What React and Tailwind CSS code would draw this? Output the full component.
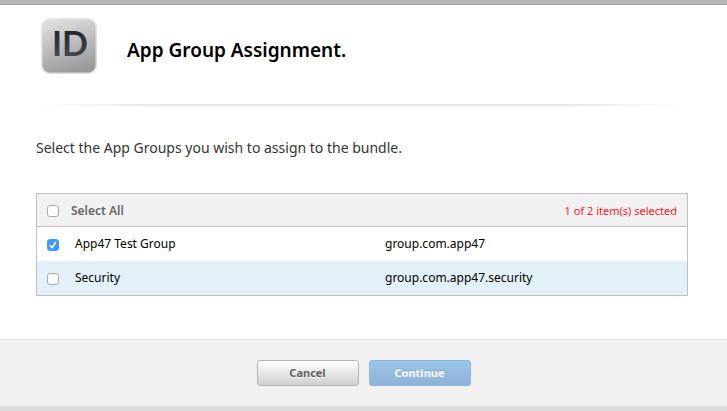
import { useState } from "react";

const groups = [
  { id: "app47", name: "App47 Test Group", identifier: "group.com.app47" },
  { id: "security", name: "Security", identifier: "group.com.app47.security" },
];

function AppIdIcon() {
  return (
    <svg className="h-14 w-14 shrink-0" viewBox="0 0 56 56" role="img" aria-label="App ID">
      <defs>
        <linearGradient id="tile" x1="0.3" y1="0" x2="0.6" y2="1">
          <stop offset="0" stopColor="#dedede" />
          <stop offset="1" stopColor="#989898" />
        </linearGradient>
        <linearGradient id="rim" x1="0" y1="0" x2="0" y2="1">
          <stop offset="0" stopColor="#e8e8e8" />
          <stop offset="1" stopColor="#dadada" />
        </linearGradient>
        <linearGradient id="ink" x1="0" y1="0" x2="0" y2="1">
          <stop offset="0.2" stopColor="#20272c" />
          <stop offset="1" stopColor="#4b5155" />
        </linearGradient>
      </defs>
      <rect width="56" height="56" rx="9" fill="url(#rim)" />
      <rect x="1.5" y="1.5" width="53" height="53" rx="7.5" fill="url(#tile)" />
      <text
        x="29"
        y="38"
        textAnchor="middle"
        fill="url(#ink)"
        className="font-['Lato',sans-serif] text-[34px] font-bold"
      >
        ID
      </text>
    </svg>
  );
}

function Checkbox({ id, checked, onChange, label }) {
  return (
    <span className="relative block h-3 w-3">
      <input
        id={id}
        type="checkbox"
        aria-label={label}
        checked={checked}
        onChange={onChange}
        className="peer block h-3 w-3 appearance-none rounded-[3px] border border-[#aaaaaa] bg-white checked:border-[#3b99fc] checked:bg-[#3b99fc]"
      />
      <svg
        className="pointer-events-none absolute inset-0 hidden h-3 w-3 peer-checked:block"
        viewBox="0 0 12 12"
        fill="none"
        stroke="white"
        strokeWidth="1.7"
        strokeLinecap="round"
        strokeLinejoin="round"
        aria-hidden="true"
      >
        <path d="M3.3 6.6 5.1 8.6 8.6 3.4" />
      </svg>
    </span>
  );
}

export default function App() {
  const [selected, setSelected] = useState(["app47"]);
  const allSelected = selected.length === groups.length;

  const toggle = (id) =>
    setSelected((current) =>
      current.includes(id) ? current.filter((item) => item !== id) : [...current, id]
    );

  return (
    <div className="min-h-screen bg-[#dadbdc] font-['Noto_Sans','Open_Sans',sans-serif] text-black">
      <div className="h-[5px] border-b border-[#a5a5a5] bg-[#b8b8b8]" />

      <main className="bg-white pt-[13px] pr-[39px] pb-[43px] pl-9">
        <header className="flex items-center gap-[30px] pl-[5px]">
          <AppIdIcon />
          <h1 className="pt-2 text-[19px] leading-6 font-semibold">App Group Assignment.</h1>
        </header>

        <div className="mt-[30px] h-[3px] bg-[linear-gradient(to_right,white,transparent_20%,transparent_80%,white),linear-gradient(to_bottom,#dfdfdf,#fafafa)]" />

        <p className="mt-[29px] text-[14px] leading-6 text-[#333333]">
          Select the App Groups you wish to assign to the bundle.
        </p>

        <table className="mt-[33px] w-full table-fixed border-separate border-spacing-0 border border-[#c0c0c0] text-left text-[12px] leading-4">
          <colgroup>
            <col className="w-[34px]" />
            <col className="w-[304px]" />
            <col />
          </colgroup>
          <thead className="bg-[#f1f1f1]">
            <tr className="h-[33px]">
              <th className="border-b border-[#c0c0c0] p-0 pt-[2px] pl-[10px]">
                <Checkbox
                  id="select-all"
                  label="Select All"
                  checked={allSelected}
                  onChange={() => setSelected(allSelected ? [] : groups.map((group) => group.id))}
                />
              </th>
              <th className="border-b border-[#c0c0c0] p-0 pt-[2px] font-semibold text-[#666666]">
                <label htmlFor="select-all">Select All</label>
              </th>
              <th className="border-b border-[#c0c0c0] p-0 pt-[2px] pr-[10px] text-right text-[11px] font-normal text-[#ff1424]">
                {selected.length} of {groups.length} item(s) selected
              </th>
            </tr>
          </thead>
          <tbody>
            {groups.map((group) => (
              <tr key={group.id} className="h-[34px] even:bg-[#e2f0f8]">
                <td className="p-0 pt-[2px] pl-[10px]">
                  <Checkbox
                    id={group.id}
                    label={group.name}
                    checked={selected.includes(group.id)}
                    onChange={() => toggle(group.id)}
                  />
                </td>
                <td className="p-0 pl-1">
                  <label htmlFor={group.id}>{group.name}</label>
                </td>
                <td className="p-0 pl-[10px]">{group.identifier}</td>
              </tr>
            ))}
          </tbody>
        </table>
      </main>

      <footer className="flex justify-center gap-[10px] border-t border-[#dddddd] bg-[#f1f1f1] py-5 text-[11px] leading-4 font-bold">
        <button
          type="button"
          className="h-[26px] w-[102px] rounded-[3px] border border-[#b4b4b4] bg-linear-to-b from-white to-[#cfcfcf] text-[#5c5c5c] text-shadow-[0_1px_0_white]"
        >
          Cancel
        </button>
        <button
          type="button"
          className="h-[26px] w-[102px] rounded-[3px] border border-[#86b6da] bg-linear-to-b from-[#9bc6e8] to-[#8fb2d8] text-white text-shadow-[0_-1px_0_#7fa5c8]"
        >
          Continue
        </button>
      </footer>
      <div className="h-[5px] bg-[#dadbdc]" />
    </div>
  );
}
